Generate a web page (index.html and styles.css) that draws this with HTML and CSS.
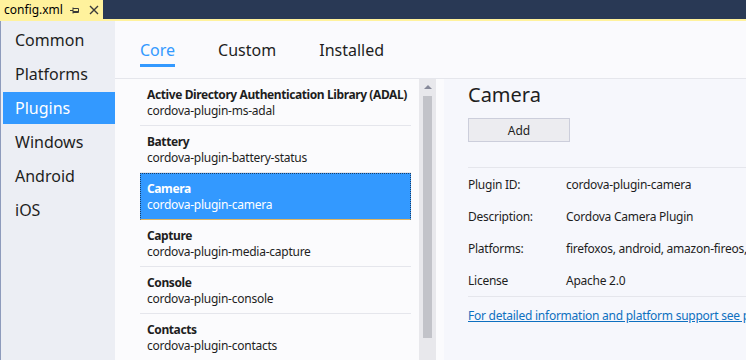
FILE: index.html
```html
<!DOCTYPE html>
<html lang="en">
<head>
  <meta charset="UTF-8">
  <title>config.xml</title>
  <link rel="stylesheet" href="styles.css">
</head>
<body>
  <div class="doc-bar">
    <div class="doc-tab">
      <span class="doc-name">config.xml</span>
      <svg class="pin" width="10" height="10" viewBox="0 0 10 10">
        <path d="M0 5.5h3M3 2.5v6M3 3.5h5.5v4H3M3 6.5h5.5" fill="none" stroke="#3a3a3a" stroke-width="1"/>
      </svg>
      <svg class="close" width="10" height="10" viewBox="0 0 10 10">
        <path d="M1 1l8 8M9 1l-8 8" stroke="#3a3a3a" stroke-width="1.4"/>
      </svg>
    </div>
  </div>
  <div class="doc-rule"></div>

  <div class="editor">
    <div class="side-nav">
      <div class="nav-item">Common</div>
      <div class="nav-item">Platforms</div>
      <div class="nav-item active">Plugins</div>
      <div class="nav-item">Windows</div>
      <div class="nav-item">Android</div>
      <div class="nav-item">iOS</div>
    </div>

    <div class="content">
      <div class="cat-tabs">
        <div class="cat-tab active">Core</div>
        <div class="cat-tab">Custom</div>
        <div class="cat-tab">Installed</div>
      </div>

      <div class="panes">
        <div class="list-pane">
          <div class="plugin-list">
            <div class="plugin">
              <div class="plugin-name">Active Directory Authentication Library (ADAL)</div>
              <div class="plugin-id">cordova-plugin-ms-adal</div>
            </div>
            <div class="plugin">
              <div class="plugin-name">Battery</div>
              <div class="plugin-id">cordova-plugin-battery-status</div>
            </div>
            <div class="plugin selected">
              <div class="plugin-name">Camera</div>
              <div class="plugin-id">cordova-plugin-camera</div>
            </div>
            <div class="plugin">
              <div class="plugin-name">Capture</div>
              <div class="plugin-id">cordova-plugin-media-capture</div>
            </div>
            <div class="plugin">
              <div class="plugin-name">Console</div>
              <div class="plugin-id">cordova-plugin-console</div>
            </div>
            <div class="plugin">
              <div class="plugin-name">Contacts</div>
              <div class="plugin-id">cordova-plugin-contacts</div>
            </div>
          </div>
          <div class="scrollbar">
            <div class="arrow-up"></div>
            <div class="thumb"></div>
          </div>
        </div>

        <div class="detail">
          <div class="detail-title">Camera</div>
          <button class="add-button">Add</button>
          <div class="props">
            <div class="prop"><span class="prop-key">Plugin ID:</span><span>cordova-plugin-camera</span></div>
            <div class="prop"><span class="prop-key">Description:</span><span>Cordova Camera Plugin</span></div>
            <div class="prop"><span class="prop-key">Platforms:</span><span>firefoxos, android, amazon-fireos, ubuntu, ios</span></div>
            <div class="prop"><span class="prop-key">License</span><span>Apache 2.0</span></div>
          </div>
          <a class="more-link" href="#">For detailed information and platform support see plugin docs</a>
        </div>
      </div>
    </div>
  </div>
</body>
</html>
```

FILE: styles.css
```css
* {
  margin: 0;
  padding: 0;
  box-sizing: border-box;
}

body {
  font-family: "Noto Sans", "Open Sans", sans-serif;
  background-color: #fafafd;
  height: 360px;
  overflow: hidden;
  color: #1e1e1e;
  display: flex;
  flex-direction: column;
}

.doc-bar {
  height: 19px;
  background: #293955;
  display: flex;
}

.doc-tab {
  width: 103px;
  background: #fff29d;
  display: flex;
  align-items: center;
  padding-left: 4px;
  font-size: 12px;
  color: #000;
}

.doc-name {
  width: 66px;
}

.pin {
  margin-right: 9px;
}

.doc-rule {
  height: 2px;
  background: #fff29d;
}

.editor {
  flex: 1;
  display: flex;
  border-left: 1px solid #8e9bbc;
  min-height: 0;
}

.side-nav {
  width: 114px;
  background: #eceef4;
  padding: 3px 0 0 2px;
}

.nav-item {
  height: 32px;
  margin-bottom: 2px;
  padding-left: 12px;
  display: flex;
  align-items: center;
  font-size: 16px;
  color: #1e1e1e;
}

.nav-item.active {
  background: #3399ff;
  color: #fff;
}

.content {
  flex: 1;
  display: flex;
  flex-direction: column;
  min-width: 0;
}

.cat-tabs {
  height: 58px;
  border-bottom: 1px solid #e5e6ec;
  display: flex;
  gap: 43px;
  padding-left: 25px;
}

.cat-tab {
  padding-top: 18px;
  height: 46px;
  font-size: 16px;
  line-height: 22px;
  color: #1e1e1e;
}

.cat-tab.active {
  color: #3399ff;
  border-bottom: 3px solid #3399ff;
}

.panes {
  flex: 1;
  display: flex;
  min-height: 0;
}

.list-pane {
  width: 329px;
  display: flex;
  padding-left: 25px;
  background: #fbfbfd;
}

.plugin-list {
  width: 271px;
}

.plugin {
  height: 47px;
  padding: 8px 7px 0;
  border-bottom: 1px solid #e5e6ec;
  font-size: 12px;
  line-height: 16px;
  letter-spacing: -0.25px;
  white-space: nowrap;
  overflow: hidden;
}

.plugin-name {
  font-weight: bold;
  letter-spacing: -0.4px;
}

.plugin.selected {
  background: #3399ff;
  color: #fff;
  border: 1px dotted #1c3f66;
  border-bottom: 1px solid #e1b45e;
  padding: 7px 6px 0;
}

.scrollbar {
  width: 17px;
  margin-left: 8px;
  background: #e8e8ec;
  display: flex;
  flex-direction: column;
  align-items: center;
  padding-top: 6px;
}

.arrow-up {
  width: 0;
  height: 0;
  border-left: 4px solid transparent;
  border-right: 4px solid transparent;
  border-bottom: 4px solid #868999;
}

.thumb {
  width: 9px;
  height: 242px;
  margin-top: 7px;
  background: #c2c3c9;
}

.detail {
  flex: 1;
  background: #f6f7fc;
  padding: 3px 0 0 24px;
  overflow: hidden;
  white-space: nowrap;
}

.detail-title {
  font-size: 20px;
  line-height: 26px;
  color: #1e1e1e;
}

.add-button {
  display: block;
  margin-top: 10px;
  width: 102px;
  height: 24px;
  background: #ececf0;
  border: 1px solid #cccedb;
  font-family: inherit;
  font-size: 12px;
  color: #1e1e1e;
}

.props {
  margin-top: 25px;
  border-top: 1px solid #e5e6ec;
  border-bottom: 1px solid #e5e6ec;
  font-size: 12px;
  letter-spacing: -0.25px;
}

.prop {
  height: 32px;
  display: flex;
  align-items: center;
}

.prop-key {
  width: 98px;
  flex-shrink: 0;
}

.more-link {
  display: block;
  margin-top: 10px;
  font-size: 12px;
  letter-spacing: -0.25px;
  color: #0e70c0;
}
```
